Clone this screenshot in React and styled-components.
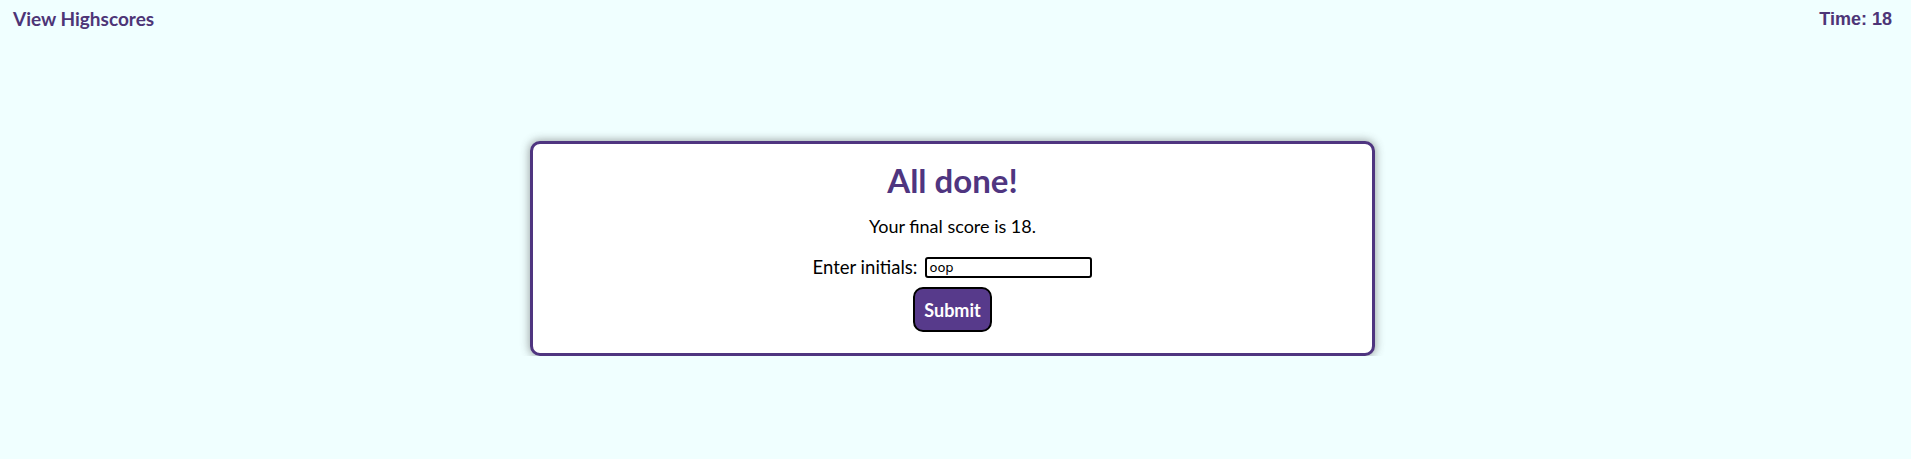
import styled, { createGlobalStyle } from "styled-components";

const GlobalStyle = createGlobalStyle`
  body {
    margin: 0;
    background-color: #f0ffff;
    font-family: Lato, "Open Sans", sans-serif;
  }
`;

const Header = styled.header`
  display: flex;
  justify-content: space-between;
  align-items: flex-start;
  padding: 7px 19px 0 13px;
`;

const HighscoresLink = styled.a`
  color: #4d3577;
  font-size: 19px;
  font-weight: bold;
  text-decoration: none;
  cursor: pointer;
`;

const Timer = styled.div`
  color: #4d3577;
  font-family: "Liberation Sans", Arial, sans-serif;
  font-size: 18px;
  font-weight: bold;
  padding-top: 2px;
`;

const Main = styled.main`
  display: flex;
  justify-content: center;
  padding: 0 6px 0 0;
  margin-top: 111px;
`;

const Card = styled.section`
  width: 839px;
  background: #ffffff;
  border: 3px solid #4f3580;
  border-radius: 10px;
  box-shadow: 0 0 8px 1px rgba(60, 60, 60, 0.45);
  display: flex;
  flex-direction: column;
  align-items: center;
  padding: 16px 0 21px;
`;

const Title = styled.h1`
  margin: 0;
  color: #4f3580;
  font-size: 33px;
  font-weight: bold;
`;

const Score = styled.p`
  margin: 15px 0 0;
  font-size: 18px;
  color: #000;
`;

const InitialsRow = styled.label`
  display: flex;
  align-items: center;
  gap: 8px;
  margin-top: 19px;
  font-size: 18.5px;
  color: #000;
`;

const InitialsInput = styled.input`
  width: 159px;
  height: 17px;
  padding: 0 2px;
  border: 2px solid #000;
  border-radius: 3px;
  font-family: "DejaVu Sans", sans-serif;
  font-size: 13px;
  outline: none;
`;

const SubmitButton = styled.button`
  margin-top: 9px;
  width: 79px;
  height: 45px;
  background-color: #573a8b;
  color: #fff;
  border: 2px solid #000;
  border-radius: 10px;
  font-family: Lato, "Open Sans", sans-serif;
  font-size: 18px;
  font-weight: bold;
  cursor: pointer;
`;

export default function App() {
  return (
    <>
      <GlobalStyle />
      <Header>
        <HighscoresLink>View Highscores</HighscoresLink>
        <Timer>Time: 18</Timer>
      </Header>
      <Main>
        <Card>
          <Title>All done!</Title>
          <Score>Your final score is 18.</Score>
          <InitialsRow>
            Enter initials:
            <InitialsInput defaultValue="oop" />
          </InitialsRow>
          <SubmitButton>Submit</SubmitButton>
        </Card>
      </Main>
    </>
  );
}
